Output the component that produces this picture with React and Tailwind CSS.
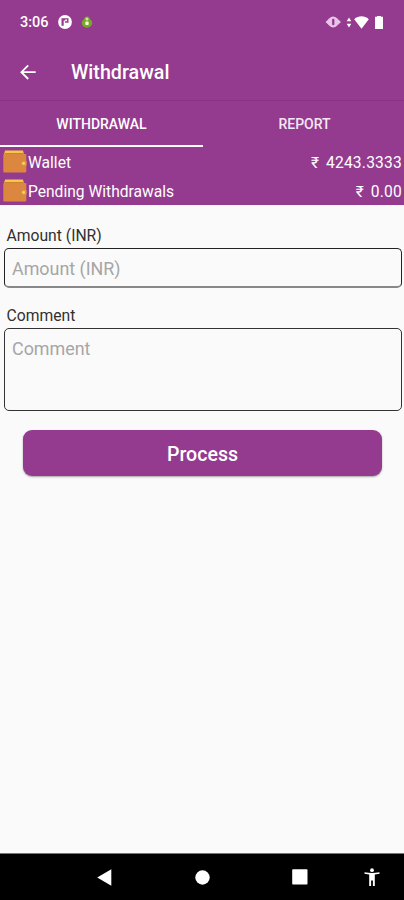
import { useState } from "react";

const balances = [
  { label: "Wallet", amount: "4243.3333" },
  { label: "Pending Withdrawals", amount: "0.00" },
];

function WalletIcon() {
  return (
    <svg width="24" height="24" viewBox="0 0 24 24" className="shrink-0">
      <path d="M2 .5h18l1 4H1z" fill="#f6c744" />
      <path d="M2 3.600h18.500" stroke="#c87836" strokeWidth="1" />
      <rect x="0.300" y="4" width="23" height="18.500" rx="1" fill="#dc8740" />
      <path d="M23.500 11.300h-3a2.100 2.100 0 0 0 0 4.200h3z" fill="#dfa044" />
      <circle cx="20.600" cy="13.400" r="1.300" fill="#f3dc5c" />
    </svg>
  );
}

function StatusBar() {
  return (
    <div className="flex h-11 items-center justify-between pl-5 pr-[21px]">
      <div className="flex items-center">
        <span className="w-[38px] pt-0.5 text-[14.500px] font-medium leading-5">3:06</span>
        <svg width="14" height="14" viewBox="0 0 14 14">
          <circle cx="7" cy="7" r="6.900" fill="#fff" />
          <path d="M3.500 3.300h7v4.500H7.100V5.600H5.700v5.200H3.500z" fill="#943a8f" />
          <rect x="7.100" y="4.500" width="2" height="1.700" fill="#fff" />
        </svg>
        <svg width="12" height="13" viewBox="0 0 12 13" className="ml-[9px]">
          <path
            d="M6 .5C8 .5 8.800 2.100 9 3.500c1.400.7 2.200 1.800 2.200 3.300 0 2.800-2.200 4.900-5.200 4.900S.8 9.600.8 6.800c0-1.500.8-2.600 2.200-3.300C3.200 2.100 4 .5 6 .5z"
            fill="#76a82c"
          />
          <circle cx="6" cy="3" r="1.500" fill="#d0e98c" />
          <rect x="4.300" y="5.600" width="3.400" height="3.500" rx="1.200" fill="#f2f9cf" />
        </svg>
      </div>
      <div className="flex items-center">
        <svg width="16" height="12" viewBox="0 0 16 12">
          <path d="M0.500 6l3.500-3.300v6.600zM16 6l-3.500-3.300v6.600z" fill="#e9c3e8" />
          <circle cx="8.200" cy="6" r="5.400" fill="#e9c3e8" />
          <rect x="7.100" y="2.700" width="2.300" height="6.600" rx="1" fill="#943a8f" />
        </svg>
        <svg width="6" height="11" viewBox="0 0 6 11" className="ml-[5px]">
          <path d="M3 .5l2.300 3.800H.7zM3 10.500l2.300-3.800H.7z" fill="#fff" />
        </svg>
        <svg width="15" height="13" viewBox="0 0 15 13" className="ml-0.5">
          <path d="M.2 3.200c4.200-3.800 10.400-3.800 14.600 0L7.500 12.800z" fill="#fff" />
        </svg>
        <svg width="8" height="13" viewBox="0 0 8 13" className="ml-1.5">
          <path d="M2 0h4v.8h2V13H0V.8h2z" fill="#fff" />
        </svg>
      </div>
    </div>
  );
}

function NavBar() {
  return (
    <nav className="flex h-[47px] items-center border-t border-[#777] bg-black pl-[97px]">
      <svg width="15" height="17" viewBox="0 0 15 17">
        <path d="M14.300 .3v16.400L.2 8.500z" fill="#fff" />
      </svg>
      <svg width="15" height="15" viewBox="0 0 15 15" className="ml-[83px]">
        <circle cx="7.500" cy="7.500" r="7.200" fill="#fff" />
      </svg>
      <svg width="16" height="16" viewBox="0 0 16 16" className="ml-[82px]">
        <rect x="0.200" y="0.200" width="15.300" height="15.400" rx="0.800" fill="#fff" />
      </svg>
      <svg width="16" height="19" viewBox="0 0 16 19" className="ml-14">
        <circle cx="8" cy="2.200" r="1.900" fill="#fff" />
        <path
          d="M.5 4.200q7.500 1.500 15 0v1.600l-4.700.8V18H8.900v-5.500H7.100V18H5.200V6.600L.5 5.800z"
          fill="#fff"
        />
      </svg>
    </nav>
  );
}

export default function App() {
  const [activeTab, setActiveTab] = useState("withdrawal");
  const [amount, setAmount] = useState("");
  const [comment, setComment] = useState("");

  return (
    <div className="flex h-[900px] w-[404px] flex-col overflow-hidden bg-[#fafafa] font-['Roboto',sans-serif]">
      <header className="h-[205px] bg-[#943a8f] text-white">
        <StatusBar />
        <div className="flex h-[57px] items-center border-b border-[#893584] pl-5">
          <svg width="17" height="17" viewBox="0 0 17 17" className="mr-[34px]">
            <path
              d="M8.200 1.400L1.400 8.200l6.800 6.800M1.400 8.200h14.300"
              fill="none"
              stroke="#fff"
              strokeWidth="1.800"
            />
          </svg>
          <h1 className="pt-0.5 text-[19.700px] font-medium leading-6">Withdrawal</h1>
        </div>
        <div className="grid h-[46px] grid-cols-[203px_1fr] text-[14px] font-medium">
          <button
            type="button"
            onClick={() => setActiveTab("withdrawal")}
            className={`border-b-2 pt-0.5 ${activeTab === "withdrawal" ? "border-white" : "border-transparent"}`}
          >
            WITHDRAWAL
          </button>
          <button
            type="button"
            onClick={() => setActiveTab("report")}
            className={`border-b-2 pl-0.5 pt-0.5 text-[#f4e6f4] ${activeTab === "report" ? "border-white" : "border-transparent"}`}
          >
            REPORT
          </button>
        </div>
        {balances.map((row) => (
          <div key={row.label} className="flex h-[29px] items-center pl-[3px] pr-0.5 text-[15.600px] leading-[22px]">
            <WalletIcon />
            <span className="pl-px pt-0.5">{row.label}</span>
            <span className="ml-auto mr-[7px] pt-0.5">₹</span>
            <span className="pt-0.5 tracking-[0.200px]">{row.amount}</span>
          </div>
        ))}
      </header>

      <main className="flex flex-1 flex-col pl-1 pr-0.5 pt-5">
        <label htmlFor="amount" className="mb-0.5 pl-[2.500px] text-[15.700px] leading-[21px] text-[#303030]">
          Amount (INR)
        </label>
        <input
          id="amount"
          value={amount}
          onChange={(e) => setAmount(e.target.value)}
          placeholder="Amount (INR)"
          className="h-10 rounded-[5px] border-[1.500px] border-b-2 border-[#222] border-b-[#888] px-[7px] pt-0.5 text-[17.900px] placeholder:text-[#a6a6a6]"
        />
        <label htmlFor="comment" className="mb-0.5 mt-[17px] pl-[2.500px] text-[15.700px] leading-[21px] text-[#303030]">
          Comment
        </label>
        <textarea
          id="comment"
          value={comment}
          onChange={(e) => setComment(e.target.value)}
          placeholder="Comment"
          className="h-[83px] resize-none rounded-[5px] border-[1.500px] border-[#333] px-[7px] pt-[9px] text-[17.900px] leading-[22px] placeholder:text-[#a6a6a6]"
        />
        <button
          type="button"
          className="ml-[19px] mr-5 mt-[19px] h-[46px] rounded-[9px] bg-[#943a8f] pt-[3px] text-[19.600px] font-medium text-white shadow-[0_1px_2px_rgba(0,0,0,0.35)]"
        >
          Process
        </button>
      </main>

      <NavBar />
    </div>
  );
}
